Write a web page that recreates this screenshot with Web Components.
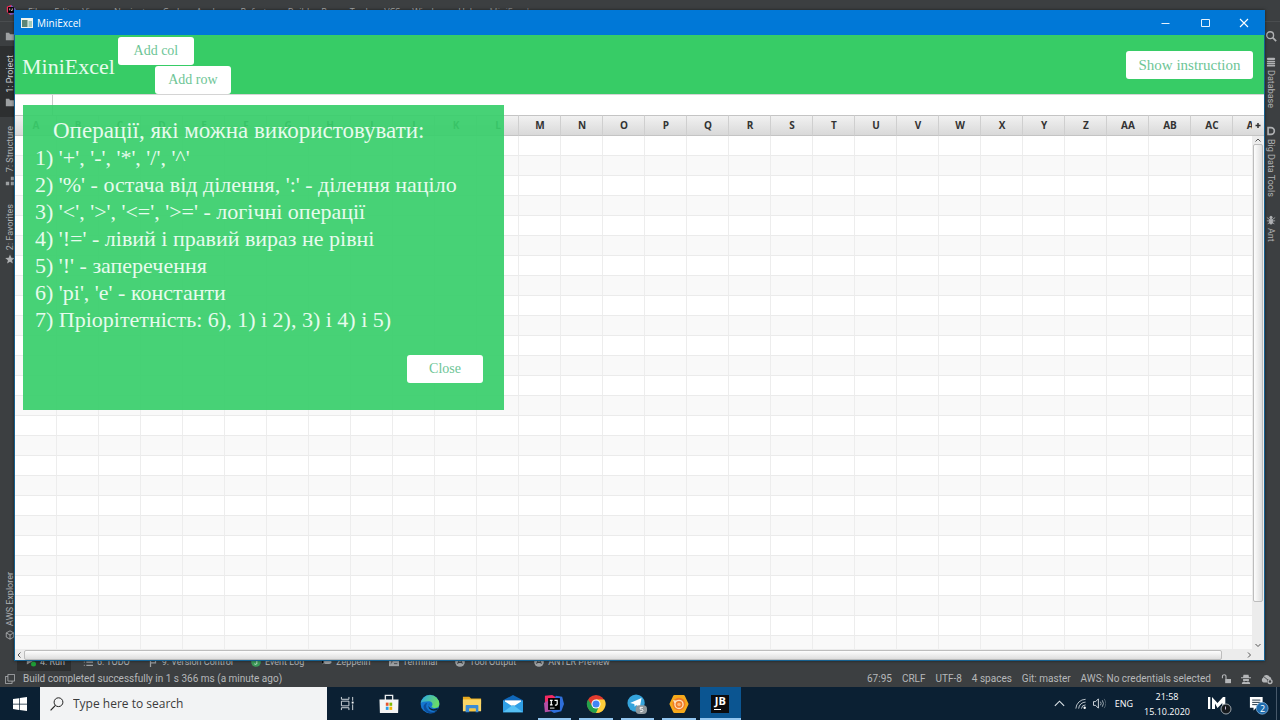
<!DOCTYPE html>
<html lang="en">
<head>
<meta charset="utf-8">
<title>MiniExcel</title>
<style>
  body { margin: 0; background: #3c3f41; font-family: "Open Sans", "Noto Sans", sans-serif; overflow: hidden; }
</style>
</head>
<body>
<desktop-screen></desktop-screen>
<script>
const define = (name, html, setup) => {
  const tpl = document.createElement('template');
  tpl.innerHTML = html;
  customElements.define(name, class extends HTMLElement {
    constructor() {
      super();
      this.attachShadow({ mode: 'open' }).append(tpl.content.cloneNode(true));
    }
    connectedCallback() { if (setup) setup(this, this.shadowRoot); }
  });
};

/* Each entry: [viewBox, markup] */
const ICONS = {
  folder: ['0 0 12 12', '<path fill="#9da0a2" d="M1 2h4l1 2h5v7H1z"/>'],
  structure: ['0 0 12 12', '<path fill="#9da0a2" d="M1 7h4v4H1zM7 7h4v4H7zM7 1h4v4H7z"/>'],
  star: ['0 0 12 12', '<path fill="#afb1b3" d="M6 .5l1.6 3.9 4.1.3-3.2 2.7 1 4.1L6 9.300l-3.500 2.200 1-4.100L.3 4.700l4.100-.3z"/>'],
  cube: ['0 0 12 12', '<path fill="none" stroke="#afb1b3" d="M6 1l4.500 2.500v5L6 11 1.500 8.500v-5zM1.500 3.500L6 6l4.500-2.500M6 6v5"/>'],
  search: ['0 0 14 14', '<circle cx="6" cy="6" r="4" fill="none" stroke="#afb1b3" stroke-width="1.600"/><path stroke="#afb1b3" stroke-width="2" d="M9 9l4 4"/>'],
  database: ['0 0 12 12', '<g fill="#afb1b3"><rect x="1" y="1" width="10" height="2.600" rx="1.300"/><rect x="1" y="4.400" width="10" height="2" rx="1"/><rect x="1" y="7" width="10" height="1.800" rx=".9"/><rect x="1" y="9.400" width="10" height="2" rx="1"/></g>'],
  bigdata: ['0 0 12 12', '<path fill="none" stroke="#afb1b3" stroke-width="2" d="M2.500 2H6a4 4 0 0 1 0 8H2.500z"/>'],
  ant: ['0 0 12 12', '<g fill="#afb1b3" stroke="#afb1b3"><ellipse cx="6" cy="3" rx="1.500" ry="1.500"/><ellipse cx="6" cy="8" rx="2" ry="3"/><path fill="none" d="M1 3l4 3M11 3L7 6M1 7h10M2 11l3-3M10 11L7 8"/></g>'],
  intellij: ['0 0 12 12', '<path fill="#f0305c" d="M1 2l5-2 5 5-6 7-4-4z"/><path fill="#7358c9" d="M6 0l6 5-2 6-5 1z"/><rect x="2.500" y="2.500" width="7" height="7"/><path stroke="#fff" stroke-width=".9" fill="none" d="M4.500 4v2.500M7.500 4v2.500H6"/>'],
  run: ['0 0 12 12', '<path fill="#8b8e90" d="M1 1l7 4-7 4z"/><circle cx="9" cy="8.500" r="3" fill="#1f9d37"/>'],
  list: ['0 0 12 12', '<path stroke="#9da0a2" stroke-width="1.500" d="M1 2h1M4 2h8M1 6h1M4 6h8M1 10h1M4 10h8"/>'],
  branch: ['0 0 12 12', '<path fill="none" stroke="#9da0a2" stroke-width="1.500" d="M3 1v11M3 7h6V2M7 3h4"/>'],
  event: ['0 0 12 12', '<circle cx="6" cy="6" r="5.800" fill="#3c9a58"/><path fill="none" stroke="#dcefe1" d="M4.500 4.500a1.500 1.500 0 1 1 2 1.500q1.500.5.500 2t-3 .3"/>'],
  zeppelin: ['0 0 12 12', '<ellipse cx="6.500" cy="6" rx="5" ry="2.500" fill="#9da0a2"/><path stroke="#9da0a2" d="M0 3l3 3-3 3"/>'],
  terminal: ['0 0 12 12', '<rect x="0" y="1" width="12" height="10" fill="#9da0a2"/><path fill="none" stroke="#3c3f41" d="M2 4l2 2-2 2M6 8h4"/>'],
  round: ['0 0 12 12', '<circle cx="6" cy="6" r="5.800" fill="#9da0a2"/><path fill="none" stroke="#3c3f41" stroke-width="1.300" d="M3 8l3-5 3 5M4 6.500h4"/>'],
  windows2: ['0 0 12 12', '<path fill="none" stroke="#afb1b3" d="M3.500.5h8v8h-8zM3.500 3h-3v8.500h8v-3"/>'],
  unlock: ['0 0 12 12', '<path fill="#b4b6b8" d="M5 6h7v5H5z"/><path fill="none" stroke="#b4b6b8" stroke-width="1.300" d="M6 6V3a2 2 0 0 0-4.300 0v2"/>'],
  inspector: ['0 0 12 12', '<path fill="#b4b6b8" d="M3 1h6l.6 3H12v1.200H0V4h2.400zM2.500 6h7v2.500h-7zM1 12q0-3 3-3l2 1 2-1q3 0 3 3z"/>'],
  cloudgear: ['0 0 14 12', '<path fill="#b4b6b8" d="M3 10a3 3 0 0 1-.5-5.500A4 4 0 0 1 10 3.500q2 .5 2 2.500l-5 1v3z"/><path stroke="#3c3f41" d="M3 3l6 5"/><circle cx="10.500" cy="9" r="2.300" fill="#3c3f41" stroke="#b4b6b8" stroke-width="1.600"/>'],
  app: ['0 0 12 10', '<rect width="12" height="10" fill="#eef3ee"/><rect x="1" y="2" width="5.500" height="7" fill="#5c8577"/><path fill="#9fc9bb" d="M7.500 3h3.500v6H7.500z"/>'],
  minimize: ['0 0 10 10', '<path stroke="#e4f1fc" d="M.5 5.500h8"/>'],
  maximize: ['0 0 10 10', '<path fill="none" stroke="#e4f1fc" d="M1.500 1.500h8v7h-8z"/>'],
  close: ['0 0 10 10', '<path fill="none" stroke="#fff" stroke-width="1.100" d="M1 1l8 8M9 1L1 9"/>'],
  up: ['0 0 8 8', '<path fill="none" stroke="#555" d="M1.500 5.500L4 3l2.500 2.500"/>'],
  down: ['0 0 8 8', '<path fill="none" stroke="#555" d="M1.500 3L4 5.500 6.500 3"/>'],
  left: ['0 0 8 8', '<path fill="none" stroke="#555" d="M5.500 1.500L3 4l2.500 2.500"/>'],
  right: ['0 0 8 8', '<path fill="none" stroke="#555" d="M3 1.500L5.500 4 3 6.500"/>'],
  plus: ['0 0 8 8', '<path stroke="#333" stroke-width="1.500" d="M4 1v5M1.500 3.500h5"/>'],
  start: ['0 0 14 14', '<path fill="#fff" d="M0 2l6-.8v5.500H0zM6.700 1.100L14 0v6.700H6.700zM0 7.400h6v5.500L0 12zM6.700 7.400H14V14l-7.300-1z"/>'],
  magnifier: ['0 0 14 14', '<circle cx="8.500" cy="5.200" r="4.400" fill="none" stroke="#222"/><path stroke="#222" stroke-width="1.200" d="M5.400 8.400L.6 13.300"/>'],
  taskview: ['0 0 16 14', '<path fill="none" stroke="#d8dde2" d="M1.500 0v2.500h8V0M1.500 4.500h8v5h-8zM1.500 14v-2.500h8V14M13.500 0v4M13.500 8v6"/><path fill="#fff" d="M12.500 5h2v2h-2z"/>'],
  store: ['0 0 22 22', '<path fill="none" stroke="#e9ecee" stroke-width="1.500" d="M7 7V1.500h8V7"/><path fill="#f5f5f5" d="M.5 6h21l-.5 15H1z"/><path fill="#e8552d" d="M7.500 9.500h3v3.500h-3z"/><path fill="#7fba00" d="M11.500 9.500h3v3.500h-3z"/><path fill="#2a9fe8" d="M7.500 14h3v3.500h-3z"/><path fill="#f5b400" d="M11.500 14h3v3.500h-3z"/>'],
  edge: ['0 0 22 22', '<defs><linearGradient id="a" x2="1" y2=".3"><stop stop-color="#2aa5e6"/><stop offset="1" stop-color="#69dc68"/></linearGradient></defs><circle cx="11" cy="11" r="10.300" fill="#1576cf"/><path fill="url(#a)" d="M.8 10A10.300 10.300 0 0 1 21.300 11q0 4.500-5 4.500c-3 0-4.500-1-3-2.500 1.500-3-1-5-4-5Q3 8 .8 10z"/><path fill="#0c4f9e" d="M8 9.500q-3 5 1 8.500 4 3.500 10 .3-4 4-9 3Q3 18 4 13q1-3 4-3.500z"/><path fill="#0b2438" d="M11 10q-3 3 0 5.500 3.500 2.500 8.500 0v1.500q-3 2-7 1-5.500-3-1.500-8z"/>'],
  explorer: ['0 0 22 22', '<path fill="#e8a91e" d="M1 3h7l2 2h11v6H1z"/><path fill="#fbd667" d="M1 6h20v13H1z"/><path fill="#3a8cd8" d="M5 12h12q1 0 1 1v7h-3v-4H8v4H4v-7q0-1 1-1z"/><path fill="#f6c643" d="M8 16h7v3H8z"/>'],
  mail: ['0 0 22 22', '<path fill="#1068ba" d="M0 7l11-6 11 6v5H0z"/><path fill="#fff" d="M2 7h18v6H2z"/><path fill="#2f9fe6" d="M0 7l11 7 11-7v13H0z"/><path fill="#56c1f5" d="M0 20l11-8 11 8z"/>'],
  idea: ['0 0 22 22', '<path fill="#f52a63" d="M1 2l8-1 5 3-9 9-4 1z"/><path fill="#b64fa5" d="M0 10l5-3 3 12-7 1z"/><path fill="#2f6fdb" d="M13 2l7 1 2 8-3 8-8 2-5-3z"/><rect x="4.500" y="4.500" width="13" height="13"/><path stroke="#fff" stroke-width="1.300" fill="none" d="M6.500 7h3M8 7v5M6.500 12h3M11.500 7h3v4q0 1.300-2.500 1.200"/><path stroke="#fff" d="M6.500 15.500h5"/>'],
  chrome: ['0 0 22 22', '<circle cx="11" cy="11" r="10" fill="#e33b2e"/><path fill="#ffce3a" d="M11 11V6h9.200A10 10 0 0 1 11 21z"/><path fill="#24a24b" d="M2.300 6L7 13.500l6.500 2L11 21A10 10 0 0 1 2.300 6z"/><circle cx="11" cy="11" r="5" fill="#fff"/><circle cx="11" cy="11" r="3.900" fill="#4285f4"/>'],
  telegram: ['0 0 22 22', '<circle cx="10" cy="10" r="9.500" fill="#35a4dc"/><path fill="#fff" d="M3.500 10L16 4.500 14 15l-4-3-1.500 2L8 11z"/><rect x="9.500" y="12.500" width="12.500" height="9.500" rx="4" fill="#8e979c"/><path fill="none" stroke="#fff" d="M17.500 14.700h-3v2h1.500q1.500 0 1.500 1.500t-3 1.300"/>'],
  gear: ['0 0 22 22', '<path fill="#f6a91b" stroke="#f6a91b" stroke-width="3" stroke-linejoin="round" d="M6 2.500h10l4 8.500-4 8.500H6L2 11z"/><circle cx="11" cy="11" r="7" fill="#f07a28"/><circle cx="11" cy="11.500" r="4.500" fill="none" stroke="#fde2bd" stroke-width="1.500"/><circle cx="11" cy="11.500" r="2" fill="#fbb877"/><path fill="#fde2bd" d="M4.500 6.500l4.500 1-3 3z"/>'],
  chevron: ['0 0 14 14', '<path fill="none" stroke="#dde3e8" stroke-width="1.200" d="M2 9.500L7 4.500l5 5"/>'],
  wifi: ['0 0 14 14', '<path fill="none" stroke="#c2cad1" d="M2 12.500A10.500 10.500 0 0 1 12.500 2.500M5 12.500a7.500 7.500 0 0 1 7.500-7M8 12.500a4.500 4.500 0 0 1 4.500-4"/><circle cx="11.500" cy="11.500" r="1.300" fill="#fff"/>'],
  sound: ['0 0 14 14', '<path fill="none" stroke="#dde3e8" d="M.5 5h2.300l3-3v10l-3-3H.5z"/><path fill="none" stroke="#aab4bc" d="M8 5q1.500 2 0 4M10 3.500q2.500 3.500 0 7"/><path fill="none" stroke="#51616e" d="M12 2q3.500 5 0 10"/>'],
  gmail: ['0 0 26 22', '<path fill="#fff" d="M2 4h2.300v12H2zM6 16V4l5.500 6L17 4h2.300v12h-3v-6l-4.800 5L9 10.500V16z"/><circle cx="20" cy="16" r="5" fill="#15191d" stroke="#9aa3ab"/><path stroke="#c7b8d4" d="M19.500 13.500v3"/>'],
  notes: ['0 0 22 22', '<path fill="#fff" d="M1 1h14v12H8l-3 3v-3H1z"/><path stroke="#0b2033" d="M3.500 4.500h9M3.500 7h9M3.500 9.500h6"/><circle cx="14.500" cy="13.500" r="6.500" fill="#1d6aac" stroke="#8db7dc" stroke-width=".8"/>']
};

define('ui-icon', `<style>:host{display:block;flex:none;width:var(--w,10px);height:var(--h,var(--w,10px))}svg{display:block;width:100%;height:100%}</style><svg aria-hidden="true"></svg>`,
  (el, root) => {
    const [box, markup] = ICONS[el.getAttribute('name')];
    const svg = root.querySelector('svg');
    svg.setAttribute('viewBox', box);
    svg.innerHTML = markup;
  });

/* Puts the icon named by the host's "icon" attribute before the label */
const leadIcon = (el, root) => {
  const icon = document.createElement('ui-icon');
  icon.setAttribute('name', el.getAttribute('icon'));
  root.querySelector('button').before(icon);
};

/* White button used in the spreadsheet application */
define('soft-button', `<style>
  :host{display:block;width:76px}
  button{display:block;width:100%;height:28px;border:0;border-radius:3px;background:#fff;color:#6dc596;font:14px/28px "Liberation Serif",serif;padding:0;white-space:nowrap}
  :host([wide]){width:127px}
  :host([wide]) button{font-size:15px}
</style><button type="button"><slot></slot></button>`);

/* ---------- IDE behind the window ---------- */
define('side-tab', `<style>
  :host{display:flex;flex-direction:column;align-items:center;gap:3px;color:#b0b2b4;font:9px/12px Roboto,sans-serif}
  button{all:unset;writing-mode:vertical-rl;white-space:nowrap}
  :host([left]){gap:4px}
  :host([left]) button{transform:rotate(180deg)}
  :host([left]) ui-icon{order:2}
</style><button type="button"><slot></slot></button>`, leadIcon);

define('strip-tab', `<style>
  :host{display:flex;align-items:center;gap:4px;color:#b0b2b4;font:9px/18px Roboto,sans-serif}
  button{all:unset;white-space:nowrap}
</style><button type="button"><slot></slot></button>`, leadIcon);

define('ide-frame', `<style>
  :host{display:grid;grid-template:22px 1fr 18px 16px / 20px 1fr 18px;background:#3c3f41;min-height:0}
  nav{grid-column:1/-1;display:flex;align-items:flex-start;gap:12px;padding:5px 0 0 6px;font:9px/14px "Open Sans",sans-serif;color:#a9abad;border-bottom:1px solid #4a4d4f;box-sizing:border-box;white-space:nowrap;overflow:hidden}
  nav a{color:inherit;text-decoration:none}
  nav span{color:#85888a}
  .rail{display:flex;flex-direction:column;overflow:hidden}
  .left .tool{display:grid;justify-content:center;height:24px;padding-top:9px;box-sizing:border-box}
  .on{background:#2d2f30;padding:9px 0 10px;color:#d0d2d4}
  .s{margin-top:9px}.f{margin-top:18px}.aws{margin-top:auto;margin-bottom:13px}
  .right{grid-column:3;align-items:center}
  .search{--w:12px;margin:8px 0 15px}
  .right side-tab{margin-bottom:18px}
  .strip{grid-column:1/-1;display:flex;gap:18px;padding-left:17px;overflow:hidden}
  .strip strip-tab:first-child{background:#2d2f30;padding:0 6px 0 9px;margin-right:-6px}
  footer{grid-column:1/-1;display:flex;align-items:center;gap:10px;padding:0 7px 0 5px;font:10px/16px Roboto,sans-serif;color:#b6b8ba;white-space:nowrap}
  .grow{flex:1;margin-left:-2px}
</style>
<nav><ui-icon name="intellij"></ui-icon><a href="#">File</a><a href="#">Edit</a><a href="#">View</a><a href="#">Navigate</a><a href="#">Code</a><a href="#">Analyze</a><a href="#">Refactor</a><a href="#">Build</a><a href="#">Run</a><a href="#">Tools</a><a href="#">VCS</a><a href="#">Window</a><a href="#">Help</a><span>MiniExcel</span></nav>
<div class="rail left">
  <div class="tool"><ui-icon name="folder"></ui-icon></div>
  <side-tab left class="on" icon="folder">1: Project</side-tab>
  <side-tab left class="s" icon="structure">7: Structure</side-tab>
  <side-tab left class="f" icon="star">2: Favorites</side-tab>
  <side-tab left class="aws" icon="cube">AWS Explorer</side-tab>
</div>
<div class="rail right">
  <ui-icon class="search" name="search"></ui-icon>
  <side-tab icon="database">Database</side-tab>
  <side-tab icon="bigdata">Big Data Tools</side-tab>
  <side-tab icon="ant">Ant</side-tab>
</div>
<div class="strip">
  <strip-tab icon="run">4: Run</strip-tab><strip-tab icon="list">6: TODO</strip-tab><strip-tab icon="branch">9: Version Control</strip-tab><strip-tab icon="event">Event Log</strip-tab><strip-tab icon="zeppelin">Zeppelin</strip-tab><strip-tab icon="terminal">Terminal</strip-tab><strip-tab icon="round">Tool Output</strip-tab><strip-tab icon="round">ANTLR Preview</strip-tab>
</div>
<footer><ui-icon name="windows2"></ui-icon><span class="grow">Build completed successfully in 1 s 366 ms (a minute ago)</span><span>67:95</span><span>CRLF</span><span>UTF-8</span><span>4 spaces</span><span>Git: master</span><span>AWS: No credentials selected</span><ui-icon name="unlock"></ui-icon><ui-icon name="inspector"></ui-icon><ui-icon name="cloudgear" style="--w:12px"></ui-icon></footer>`);

/* ---------- MiniExcel window ---------- */
define('data-sheet', `<style>
  :host{display:grid;grid-template:1fr 11px / 1fr 12px;min-height:0;background:#fff;overflow:hidden}
  .view{overflow:hidden;min-width:0}
  table{border-collapse:separate;border-spacing:0;table-layout:fixed;width:0}
  th,td{box-sizing:border-box;padding:0;width:42px;border-right:1px solid #ededed;border-bottom:1px solid #ebebeb}
  th{height:21px;padding-left:1px;font-size:10px;line-height:19px;font-weight:700;color:#333;background:linear-gradient(#f1f1f1,#d9d9d9);border-top:1px solid #c4c4c4;border-bottom-color:#c4c4c4;border-right-color:#cfcfcf}
  td{height:20px}
  tr:nth-child(even) td{background:#f9f9f9}
  .v,.h{display:flex;align-items:center;background:#ececec}
  .v{flex-direction:column}
  .v ui-icon,.h ui-icon{--w:8px}
  .h{grid-column:1/-1;padding-right:11px;gap:1px}
  button{all:unset;box-sizing:border-box;width:12px;height:21px;display:grid;place-items:center;background:linear-gradient(#f1f1f1,#d9d9d9);border:1px solid #c4c4c4;border-width:1px 0}
  .thumb{box-sizing:border-box;border:1px solid #bdbdbd;border-radius:2px}
  .v .thumb{width:10px;flex:457;background:linear-gradient(90deg,#fdfdfd,#dedede)}
  .h .thumb{height:10px;flex:1200;background:linear-gradient(#fdfdfd,#dedede)}
  .v i{flex:39}.h i{flex:21}
</style>
<div class="view"><table><thead><tr></tr></thead><tbody></tbody></table></div>
<div class="v"><button type="button" aria-label="Column menu"><ui-icon name="plus"></ui-icon></button><ui-icon name="up"></ui-icon><div class="thumb"></div><i></i><ui-icon name="down"></ui-icon></div>
<div class="h"><ui-icon name="left"></ui-icon><div class="thumb"></div><i></i><ui-icon name="right"></ui-icon></div>`,
  (el, root) => {
    const names = Array.from({ length: 30 }, (_, i) => (i > 25 ? 'A' : '') + String.fromCharCode(65 + i % 26));
    root.querySelector('thead tr').innerHTML = names.map(n => `<th scope="col">${n}</th>`).join('');
    root.querySelector('tbody').innerHTML = ('<tr>' + '<td></td>'.repeat(30) + '</tr>').repeat(40);
  });

define('instruction-panel', `<style>
  :host{display:block;box-sizing:border-box;width:481px;padding:12px 21px 27px 12px;background:rgba(57,207,108,.93);color:#e6fbed;font:22px/27px "Liberation Serif",serif;white-space:nowrap}
  h2{margin:0 0 0 18px;font:inherit;font-size:23px}
  ol{list-style:none;margin:0 0 22px;padding:0}
  soft-button{margin-left:auto}
</style>
<h2>Операції, які можна використовувати:</h2>
<ol>
<li>1) '+', '-', '*', '/', '^'</li>
<li>2) '%' - остача від ділення, ':' - ділення націло</li>
<li>3) '&lt;', '&gt;', '&lt;=', '&gt;=' - логічні операції</li>
<li>4) '!=' - лівий і правий вираз не рівні</li>
<li>5) '!' - заперечення</li>
<li>6) 'pi', 'e' - константи</li>
<li>7) Пріорітетність: 6), 1) і 2), 3) і 4) і 5)</li>
</ol>
<soft-button>Close</soft-button>`);

define('excel-window', `<style>
  :host{display:grid;grid-template-rows:25px 59px 21px 1fr;box-sizing:border-box;border:1px solid #16608f;border-top:0;box-shadow:0 0 3px #0008;background:#fff}
  .title{display:flex;align-items:center;padding:0 2px 0 7px;margin:0 -1px;background:#0078d7;color:#fff;font-size:10px}
  .title span{flex:1;margin-left:4px}
  .title button{all:unset;width:39px;height:25px;display:grid;place-items:center}
  header{display:flex;align-items:center;padding:0 11px 0 7px;background:#37cc66}
  h1{margin:0;padding:4px 3px 0 0;font:22px/27px "Liberation Serif",serif;color:#e6fbed}
  .add{display:grid;gap:1px;margin-right:auto;padding-top:1px}
  .add soft-button:last-child{margin-left:37px}
  .formula{display:grid;grid-template-columns:38px 1fr;border-top:1px solid #d4d4d4;box-sizing:border-box}
  input{border:0;border-right:1px solid #c8c8c8;padding:0 4px;min-width:0;background:#fff;font:10px "Open Sans",sans-serif}
  input:last-child{border-right:0}
  instruction-panel{position:absolute;left:8px;top:95px}
</style>
<div class="title"><ui-icon name="app" style="--w:12px;--h:10px"></ui-icon><span>MiniExcel</span><button type="button" aria-label="Minimize"><ui-icon name="minimize"></ui-icon></button><button type="button" aria-label="Maximize"><ui-icon name="maximize"></ui-icon></button><button type="button" aria-label="Close"><ui-icon name="close"></ui-icon></button></div>
<header><h1>MiniExcel</h1><div class="add"><soft-button>Add col</soft-button><soft-button>Add row</soft-button></div><soft-button wide>Show instruction</soft-button></header>
<div class="formula"><input aria-label="Cell"><input aria-label="Formula"></div>
<data-sheet></data-sheet>
<instruction-panel></instruction-panel>`);

/* ---------- Taskbar ---------- */
define('task-bar', `<style>
  :host{display:grid;grid-template-columns:40px 287px 41px 373px 1fr;height:33px;background:#0b2033;color:#fff}
  button{all:unset;display:grid;place-items:center;box-sizing:border-box}
  .search{display:flex;align-items:center;gap:9px;padding-left:10px;background:#f2f3f4}
  .search input{all:unset;flex:1;font:12px/33px "Open Sans",sans-serif}
  .search input::placeholder{color:#3b3b3b;opacity:1}
  .apps{display:grid;grid-template-columns:repeat(9,1fr)}
  .apps button{--w:20px;position:relative}
  .open::after{content:"";position:absolute;left:4px;right:4px;bottom:0;height:2px;background:#93c6f0}
  .active{background:#0b5591}
  .active::after{left:0;right:0}
  .jb{width:18px;height:18px;box-sizing:border-box;background:#0c0c0e;font-size:11px;font-weight:700;line-height:12px;text-align:center;position:relative}
  .jb::after{content:"";position:absolute;left:3px;bottom:3px;width:7px;height:1px;background:#fff}
  .tray{display:flex;align-items:center;justify-content:flex-end;font-size:9px;line-height:15px;--w:13px;padding-right:3px}
  .tray time{text-align:center;margin:0 15px 0 10px;width:48px;white-space:nowrap}
  .lang{margin-left:9px}
  .note{position:relative;--w:20px;margin:4px 7px 0 17px}
  .note b{position:absolute;left:9px;top:5px;width:9px;text-align:center;font-weight:400;font-size:9px;line-height:15px}
  .edge{width:1px;height:33px;background:#46586a}
</style>
<button type="button" aria-label="Start"><ui-icon name="start" style="--w:14px"></ui-icon></button>
<label class="search"><ui-icon name="magnifier" style="--w:14px"></ui-icon><input type="text" placeholder="Type here to search" aria-label="Search"></label>
<button type="button" aria-label="Task View"><ui-icon name="taskview" style="--w:15px"></ui-icon></button>
<div class="apps">
<button type="button" aria-label="Store"><ui-icon name="store"></ui-icon></button>
<button type="button" aria-label="Edge"><ui-icon name="edge"></ui-icon></button>
<button type="button" aria-label="Explorer"><ui-icon name="explorer"></ui-icon></button>
<button type="button" aria-label="Mail"><ui-icon name="mail"></ui-icon></button>
<button type="button" aria-label="IntelliJ IDEA" class="open"><ui-icon name="idea"></ui-icon></button>
<button type="button" aria-label="Chrome" class="open"><ui-icon name="chrome"></ui-icon></button>
<button type="button" aria-label="Telegram" class="open"><ui-icon name="telegram"></ui-icon></button>
<button type="button" aria-label="Tools" class="open"><ui-icon name="gear"></ui-icon></button>
<button type="button" class="open active"><span class="jb">JB</span></button>
</div>
<div class="tray"><ui-icon name="chevron"></ui-icon><ui-icon name="wifi" style="margin:0 6px 0 8px"></ui-icon><ui-icon name="sound"></ui-icon><span class="lang">ENG</span><time>21:58<br>15.10.2020</time><ui-icon name="gmail" style="--w:26px;--h:22px"></ui-icon><div class="note"><ui-icon name="notes"></ui-icon><b>2</b></div><div class="edge"></div></div>`);

define('desktop-screen', `<style>
  :host{display:grid;grid-template-rows:1fr auto;height:100vh;position:relative}
  .area{position:relative;display:grid;min-height:0}
  excel-window{position:absolute;inset:10px 15px 26px 14px}
</style><div class="area"><ide-frame></ide-frame><excel-window></excel-window></div><task-bar></task-bar>`);
</script>
</body>
</html>
